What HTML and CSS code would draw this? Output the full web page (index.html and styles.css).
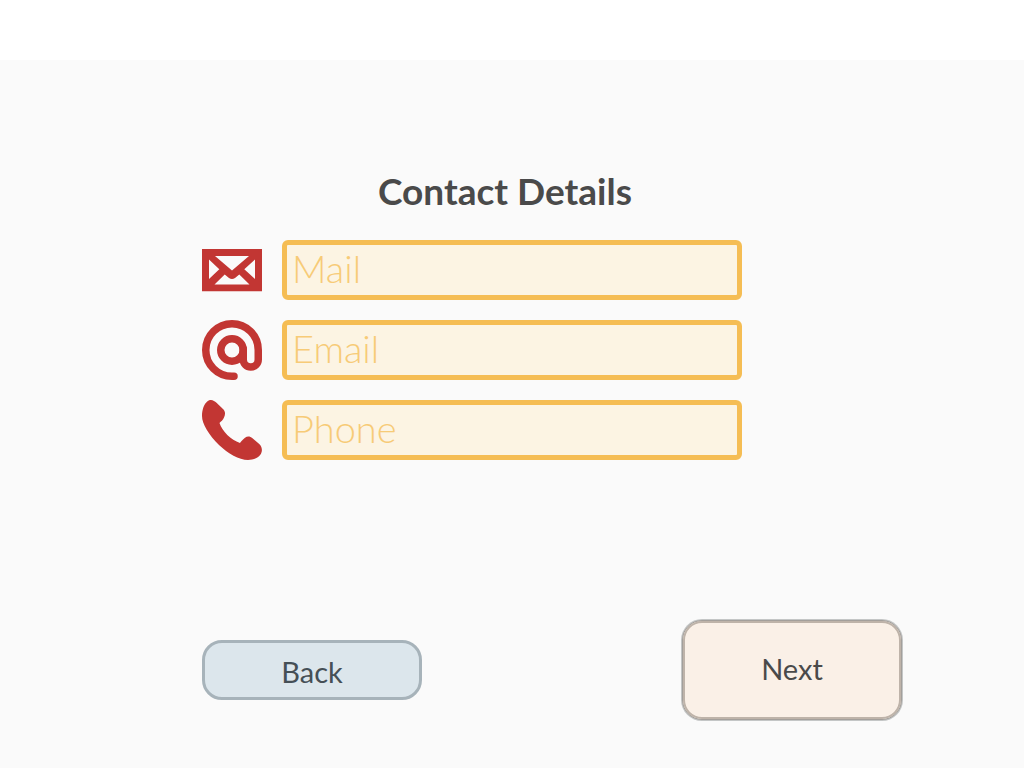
FILE: index.html
```html
<!DOCTYPE html>
<html lang="en">
<head>
<meta charset="utf-8">
<meta name="viewport" content="width=device-width, initial-scale=1">
<title>Contact Details</title>
<link rel="stylesheet" href="styles.css">
</head>
<body>
<header class="topbar"></header>
<main class="page">
  <form class="form">
    <div class="details">
      <h1 class="title">Contact Details</h1>
      <div class="field">
        <label class="label" for="mail" aria-label="Mail">
          <svg class="icon" viewBox="0 0 60 60" aria-hidden="true">
            <path fill="currentColor" fill-rule="evenodd" d="M0 9H60V51.300H0ZM13 16L30 30.500L47 16ZM7 19.500V39L17.300 29.300ZM53 19.500L42.300 29.300L53 39ZM12.500 44.500H47.500L37.300 34.500L33 38Q30 40 27 38L22.700 34.500Z"/>
          </svg>
        </label>
        <input class="input" id="mail" type="text" placeholder="Mail">
      </div>
      <div class="field">
        <label class="label" for="email" aria-label="Email">
          <svg class="icon" viewBox="0 0 60 60" aria-hidden="true">
            <g fill="none" stroke="currentColor" stroke-width="7.500">
              <circle cx="30" cy="30" r="11.250"/>
              <path stroke-linecap="round" d="M32 56.250H30A26.250 26.250 0 1 1 56.250 30V39.500A7.500 7.500 0 0 1 41.250 39.500V29"/>
            </g>
          </svg>
        </label>
        <input class="input" id="email" type="email" placeholder="Email">
      </div>
      <div class="field">
        <label class="label" for="phone" aria-label="Phone">
          <svg class="icon" viewBox="0 0 60 60" aria-hidden="true">
            <path fill="currentColor" d="M9 0C11 0 13 1.500 14.500 2.800L21 9C23.500 11.500 23.500 14 22 17.500C21 20 19 21.500 17.500 23C20 31 29 40 38 43C39.500 41 41 39.500 43 37.800C45.500 36 48 36.200 50.500 38.300L57.500 44.300C60.500 47.500 60.500 51.500 58.500 54.500C56 58.500 50.500 60 46 60C37 60 26 53.500 17 45C7 35 0 24 0 16C0 10 2 4 5.500 1.300C6.500 .4 7.700 0 9 0Z"/>
          </svg>
        </label>
        <input class="input" id="phone" type="tel" placeholder="Phone">
      </div>
    </div>
    <div class="actions">
      <button class="button button-back" type="button">Back</button>
      <button class="button button-next" type="submit">Next</button>
    </div>
  </form>
</main>
</body>
</html>
```
FILE: styles.css
```css
* {
  box-sizing: border-box;
}

body {
  margin: 0;
  min-height: 100vh;
  display: flex;
  flex-direction: column;
  background: #fafafa;
  color: #4a4a4a;
  font-family: Lato, "Open Sans", sans-serif;
}

.topbar {
  height: 60px;
  background: #fff;
}

.page {
  flex: 1;
  display: flex;
  padding: 102px 122px 48px 202px;
}

.form {
  flex: 1;
  max-width: 700px;
  display: flex;
  flex-direction: column;
  justify-content: space-between;
}

.details {
  display: flex;
  flex-direction: column;
  gap: 20px;
  max-width: 540px;
}

.title {
  margin: 0;
  padding-left: 66px;
  text-align: center;
  font-size: 37px;
  line-height: 58px;
  font-weight: 700;
}

.field {
  display: flex;
  gap: 20px;
}

.label {
  flex: none;
  display: block;
  color: #c23633;
}

.icon {
  display: block;
  width: 60px;
  height: 60px;
}

.input {
  flex: 1;
  min-width: 0;
  height: 60px;
  padding: 0 5px 4px;
  border: 5px solid #f5bd54;
  border-radius: 6px;
  background: #fcf4e3;
  color: #f5bd54;
  font-family: inherit;
  font-size: 38px;
  font-weight: 300;
}

.input::placeholder {
  color: #f7cb77;
  opacity: 1;
}

.actions {
  display: flex;
  justify-content: space-between;
  align-items: center;
  gap: 20px;
}

.button {
  width: 220px;
  border: 3px solid;
  border-radius: 20px;
  font-family: inherit;
  font-size: 29px;
  font-weight: 400;
}

.button-back {
  height: 60px;
  padding: 2px 0 0;
  border-color: #a7b3ba;
  background: #dce6ec;
  color: #454f56;
}

.button-next {
  height: 100px;
  padding: 0 0 3px;
  border: 1px solid #a39f9b;
  background: #faf0e7;
  color: #4a4a4a;
  box-shadow: inset 0 0 0 2px #beb3a9, 0 0 0 1px #c4c6c6;
}
```
